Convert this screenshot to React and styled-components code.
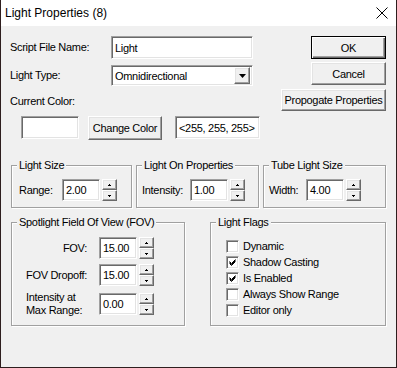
import React from 'react';
import styled, { createGlobalStyle, css } from 'styled-components';

const GlobalStyle = createGlobalStyle`
  html, body {
    margin: 0;
    padding: 0;
    background: #f0f0f0;
  }
  * {
    box-sizing: border-box;
  }
`;

const sunken = css`
  background: #fff;
  border: 1px solid;
  border-color: #a0a0a0 #fff #fff #a0a0a0;
  box-shadow: inset 1px 1px 0 #696969, inset -1px -1px 0 #e3e3e3;
`;

const raised = css`
  background: #f0f0f0;
  border: 1px solid;
  border-color: #fff #696969 #696969 #fff;
  box-shadow: inset -1px -1px 0 #a0a0a0, inset 1px 1px 0 #e3e3e3;
`;

const Window = styled.div`
  width: 397px;
  height: 368px;
  background: #f0f0f0;
  border: 1px solid #2e1e1e;
  border-top: none;
  display: flex;
  flex-direction: column;
  font-family: "Liberation Sans", Arial, sans-serif;
  font-size: 11px;
  letter-spacing: -0.3px;
  color: #000;
`;

const TitleBar = styled.div`
  height: 26px;
  flex: none;
  background: #fff;
  display: flex;
  align-items: center;
  justify-content: space-between;
  padding: 0 8px 0 4px;
  font-size: 12px;
  letter-spacing: 0;
`;

const Body = styled.div`
  padding: 10px 10px 0 9px;
`;

const TopSection = styled.div`
  display: flex;
  justify-content: space-between;
  align-items: flex-start;
`;

const LeftCol = styled.div`
  display: flex;
  flex-direction: column;
`;

const RightCol = styled.div`
  display: flex;
  flex-direction: column;
  align-items: flex-end;
`;

const Row = styled.div`
  display: flex;
  align-items: center;
  height: ${p => p.$h || 23}px;
  margin-top: ${p => p.$mt || 0}px;
  padding-left: ${p => p.$pl || 0}px;
`;

const Label = styled.div`
  width: ${p => p.$w}px;
  margin-right: ${p => p.$mr || 0}px;
  flex: none;
  line-height: 13px;
  text-align: ${p => p.$align || 'left'};
`;

const Field = styled.div`
  ${sunken};
  width: ${p => p.$w}px;
  height: ${p => p.$h || 23}px;
  margin-left: ${p => p.$ml || 0}px;
  flex: none;
  display: flex;
  align-items: center;
  padding-left: 3px;
  white-space: nowrap;
  overflow: hidden;
`;

const Combo = styled(Field)`
  padding-right: 2px;
  justify-content: space-between;
`;

const ComboButton = styled.div`
  ${raised};
  width: 16px;
  height: 17px;
  display: flex;
  align-items: center;
  justify-content: center;
`;

const Button = styled.div`
  ${raised};
  width: ${p => p.$w}px;
  height: ${p => p.$h || 23}px;
  margin-top: ${p => p.$mt || 0}px;
  margin-left: ${p => p.$ml || 0}px;
  flex: none;
  display: flex;
  align-items: center;
  justify-content: center;
  white-space: nowrap;
  ${p => p.$default && css`
    border-color: #000;
    box-shadow: inset 1px 1px 0 #fff, inset -1px -1px 0 #696969, inset -2px -2px 0 #a0a0a0;
  `}
`;

const GroupRow = styled.div`
  display: grid;
  grid-template-columns: ${p => p.$cols};
  column-gap: ${p => p.$gap}px;
  margin-top: ${p => p.$mt}px;
  margin-left: 1px;
`;

const Group = styled.div`
  position: relative;
  height: ${p => p.$h}px;
  border: 1px solid #a0a0a0;
  box-shadow: 1px 1px 0 #fff, inset 1px 1px 0 #fff;
  padding: ${p => p.$pad};
  display: flex;
  flex-direction: column;
`;

const Legend = styled.span`
  position: absolute;
  top: -7px;
  left: 5px;
  padding: 0 2px;
  line-height: 13px;
  background: #f0f0f0;
`;

const SpinWrap = styled.div`
  display: flex;
  flex-direction: column;
  margin-left: 2px;
`;

const SpinButton = styled.div`
  ${raised};
  width: 15px;
  height: 11px;
  display: flex;
  align-items: center;
  justify-content: center;
`;

const CheckRow = styled.div`
  display: flex;
  align-items: center;
  height: 16px;
  gap: 4px;
`;

const CheckBox = styled.div`
  ${sunken};
  width: 13px;
  height: 13px;
  flex: none;
  display: flex;
  align-items: center;
  justify-content: center;
`;

const Arrow = ({ down }) => (
  <svg width="5" height="3" viewBox="0 0 5 3" style={{ display: 'block' }}>
    {down ? (
      <>
        <rect x="1" y="1" width="3" height="1" fill="#000" />
        <rect x="2" y="2" width="1" height="1" fill="#000" />
      </>
    ) : (
      <>
        <rect x="2" y="1" width="1" height="1" fill="#000" />
        <rect x="1" y="2" width="3" height="1" fill="#000" />
      </>
    )}
  </svg>
);

const Spinner = () => (
  <SpinWrap>
    <SpinButton><Arrow /></SpinButton>
    <SpinButton><Arrow down /></SpinButton>
  </SpinWrap>
);

const SpinField = ({ label, labelWidth, labelGap, value, align, mt, h }) => (
  <Row $h={h || 22} $mt={mt}>
    <Label $w={labelWidth} $mr={labelGap} $align={align}>{label}</Label>
    <Field $w={38} $h={22}>{value}</Field>
    <Spinner />
  </Row>
);

const Check = ({ checked, label }) => (
  <CheckRow>
    <CheckBox>
      {checked && (
        <svg width="9" height="9" viewBox="0 0 9 9" style={{ display: 'block' }}>
          <path d="M1.5 3.5 L3.5 5.5 L7.5 1.5 M1.5 4.5 L3.5 6.5 L7.5 2.5 M1.5 5.5 L3.5 7.5 L7.5 3.5" stroke="#000" strokeWidth="1" fill="none" />
        </svg>
      )}
    </CheckBox>
    <span>{label}</span>
  </CheckRow>
);

const flags = [
  { label: 'Dynamic', checked: false },
  { label: 'Shadow Casting', checked: true },
  { label: 'Is Enabled', checked: true },
  { label: 'Always Show Range', checked: false },
  { label: 'Editor only', checked: false },
];

const App = () => (
  <>
    <GlobalStyle />
    <Window>
      <TitleBar>
        <span>Light Properties (8)</span>
        <svg width="12" height="12" viewBox="0 0 12 12">
          <path d="M0.5 0.5 L11.5 11.5 M11.5 0.5 L0.5 11.5" stroke="#000" strokeWidth="1" />
        </svg>
      </TitleBar>
      <Body>
        <TopSection>
          <LeftCol>
            <Row>
              <Label $w={101}>Script File Name:</Label>
              <Field $w={142}>Light</Field>
            </Row>
            <Row $h={21} $mt={6}>
              <Label $w={101}>Light Type:</Label>
              <Combo $w={142} $h={21}>
                <span>Omnidirectional</span>
                <ComboButton>
                  <svg width="7" height="4" viewBox="0 0 7 4" style={{ display: 'block' }}>
                    <path d="M0 0 H7 L3.5 4 Z" fill="#000" />
                  </svg>
                </ComboButton>
              </Combo>
            </Row>
            <Row $h={13} $mt={9}>
              <Label $w={120}>Current Color:</Label>
            </Row>
            <Row $mt={8} $pl={11}>
              <Field $w={58} />
              <Button $w={74} $h={24} $ml={9}>Change Color</Button>
              <Field $w={85} $ml={13}>&lt;255, 255, 255&gt;</Field>
            </Row>
          </LeftCol>
          <RightCol>
            <Button $w={75} $default>OK</Button>
            <Button $w={75} $mt={3}>Cancel</Button>
            <Button $w={105} $h={22} $mt={4}>Propogate Properties</Button>
          </RightCol>
        </TopSection>

        <GroupRow $cols="121px 123px 1fr" $gap={4} $mt={26}>
          <Group $h={43} $pad="13px 0 0 7px">
            <Legend>Light Size</Legend>
            <SpinField label="Range:" labelWidth={43} value="2.00" />
          </Group>
          <Group $h={43} $pad="13px 0 0 5px">
            <Legend>Light On Properties</Legend>
            <SpinField label="Intensity:" labelWidth={48} value="1.00" />
          </Group>
          <Group $h={43} $pad="13px 0 0 5px">
            <Legend>Tube Light Size</Legend>
            <SpinField label="Width:" labelWidth={37} value="4.00" />
          </Group>
        </GroupRow>

        <GroupRow $cols="174px 1fr" $gap={25} $mt={14}>
          <Group $h={104} $pad="14px 0 0 14px">
            <Legend>Spotlight Field Of View (FOV)</Legend>
            <SpinField label="FOV:" labelWidth={61} labelGap={12} align="right" value="15.00" />
            <SpinField label="FOV Dropoff:" labelWidth={61} labelGap={12} value="15.00" mt={5} />
            <SpinField
              label={<>Intensity at<br />Max Range:</>}
              labelWidth={61}
              labelGap={12}
              value="0.00"
              mt={5}
              h={26}
            />
          </Group>
          <Group $h={104} $pad="15px 0 0 15px">
            <Legend>Light Flags</Legend>
            {flags.map(f => (
              <Check key={f.label} {...f} />
            ))}
          </Group>
        </GroupRow>
      </Body>
    </Window>
  </>
);

export default App;
